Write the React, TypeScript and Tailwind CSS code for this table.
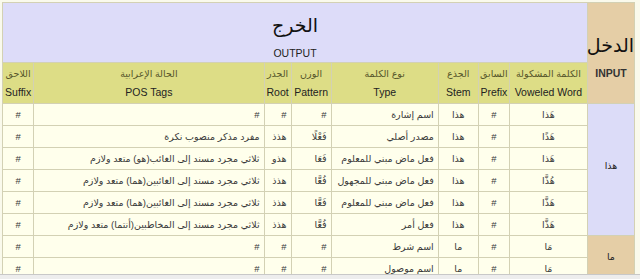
type Row = {
  word: string
  prefix: string
  stem: string
  type: string
  pattern: string
  root: string
  pos: string
  suffix: string
}

const haza: Row[] = [
  { word: 'هَذا', prefix: '#', stem: 'هذا', type: 'اسم إشارة', pattern: '#', root: '#', pos: '#', suffix: '#' },
  { word: 'هَذًا', prefix: '#', stem: 'هذا', type: 'مصدر أصلي', pattern: 'فَعْلًا', root: 'هذذ', pos: 'مفرد مذكر منصوب نكرة', suffix: '#' },
  { word: 'هَذا', prefix: '#', stem: 'هذا', type: 'فعل ماض مبني للمعلوم', pattern: 'فَعَا', root: 'هذو', pos: 'ثلاثي مجرد مسند إلى الغائب(هو) متعد ولازم', suffix: '#' },
  { word: 'هُذَّا', prefix: '#', stem: 'هذا', type: 'فعل ماض مبني للمجهول', pattern: 'فُعَّا', root: 'هذذ', pos: 'ثلاثي مجرد مسند إلى الغائبين(هما) متعد ولازم', suffix: '#' },
  { word: 'هَذَّا', prefix: '#', stem: 'هذا', type: 'فعل ماض مبني للمعلوم', pattern: 'فَعَّا', root: 'هذذ', pos: 'ثلاثي مجرد مسند إلى الغائبين(هما) متعد ولازم', suffix: '#' },
  { word: 'هَذَّا', prefix: '#', stem: 'هذا', type: 'فعل أمر', pattern: 'فُعَّا', root: 'هذذ', pos: 'ثلاثي مجرد مسند إلى المخاطبين(أنتما) متعد ولازم', suffix: '#' },
]

const ma: Row[] = [
  { word: 'مَا', prefix: '#', stem: 'ما', type: 'اسم شرط', pattern: '#', root: '#', pos: '#', suffix: '#' },
  { word: 'مَا', prefix: '#', stem: 'ما', type: 'اسم موصول', pattern: '#', root: '#', pos: '#', suffix: '#' },
]

const cell =
  'border border-[#d3d1b4] bg-[#ffffec] h-[22px] p-0 px-[4px] text-[9.5px] leading-[20px] text-[#3a3a3a] align-middle whitespace-nowrap overflow-hidden'
const head =
  'border border-[#d3d1b4] bg-[#dddd86] p-0 text-[10.5px] text-[#222] align-middle text-center leading-[19px] whitespace-nowrap overflow-hidden'

function DataRow({ row, input }: { row: Row; input?: React.ReactNode }) {
  return (
    <tr className="h-[22px]">
      {input}
      <td className={`${cell} text-center`}>{row.word}</td>
      <td className={`${cell} text-center`}>{row.prefix}</td>
      <td className={`${cell} text-center`}>{row.stem}</td>
      <td className={`${cell} text-right`}>{row.type}</td>
      <td className={`${cell} text-right`}>{row.pattern}</td>
      <td className={`${cell} text-right`}>{row.root}</td>
      <td className={`${cell} text-right`}>{row.pos}</td>
      <td className={`${cell} text-center`}>{row.suffix}</td>
    </tr>
  )
}

function Head({ ar, en }: { ar: string; en: string }) {
  return (
    <td className={head}>
      <div className="text-[9.5px] text-[#55552a]">{ar}</div>
      <div>{en}</div>
    </td>
  )
}

export default function App() {
  return (
    <div className="h-[279px] w-[640px] overflow-hidden bg-white flex flex-col font-['Liberation_Sans','DejaVu_Sans',sans-serif]">
      <div className="flex-1 overflow-hidden bg-[#fafaec] pt-[2px] pl-[2px]">
        <table dir="rtl" className="table-fixed border-collapse w-[633px] border border-[#cfcdb0]">
          <colgroup>
            <col className="w-[47px]" />
            <col className="w-[78px]" />
            <col className="w-[31px]" />
            <col className="w-[40px]" />
            <col className="w-[107px]" />
            <col className="w-[40px]" />
            <col className="w-[27px]" />
            <col className="w-[230px]" />
            <col className="w-[31px]" />
          </colgroup>
          <tbody>
            <tr className="h-[60px]">
              <td rowSpan={2} className="border border-[#d3d1b4] bg-[#e5cea6] p-0 text-center align-top">
                <div className="text-[19px] leading-[24px] text-[#111] mt-[31px]">الدخل</div>
                <div className="text-[10.5px] font-bold text-[#333] leading-[16px] mt-[7px]">INPUT</div>
              </td>
              <td colSpan={8} className="border border-[#d3d1b4] bg-[#dddcf9] p-0 text-center align-top overflow-hidden">
                <div className="text-[19px] leading-[26px] text-[#111] mt-[10px]">الخرج</div>
                <div className="text-[10.5px] text-[#222] leading-[16px] mt-[6px]">OUTPUT</div>
              </td>
            </tr>
            <tr className="h-[41px]">
              <Head ar="الكلمة المشكولة" en="Voweled Word" />
              <Head ar="السابق" en="Prefix" />
              <Head ar="الجذع" en="Stem" />
              <Head ar="نوع الكلمة" en="Type" />
              <Head ar="الوزن" en="Pattern" />
              <Head ar="الجذر" en="Root" />
              <Head ar="الحالة الإعرابية" en="POS Tags" />
              <Head ar="اللاحق" en="Suffix" />
            </tr>
            {haza.map((r, i) => (
              <DataRow
                key={'h' + i}
                row={r}
                input={
                  i === 0 ? (
                    <td rowSpan={6} className="border border-[#d3d1b4] bg-[#dcdcf8] p-0 pb-[6px] text-center align-middle text-[9.5px] text-[#222]">
                      هذا
                    </td>
                  ) : undefined
                }
              />
            ))}
            {ma.map((r, i) => (
              <DataRow
                key={'m' + i}
                row={r}
                input={
                  i === 0 ? (
                    <td rowSpan={2} className="border border-[#d3d1b4] bg-[#e5cea6] p-0 text-center align-middle text-[9.5px] text-[#222]">
                      ما
                    </td>
                  ) : undefined
                }
              />
            ))}
          </tbody>
        </table>
      </div>
      <div className="h-[5px] border-t border-[#c8c8c8] bg-[#ededed]" />
    </div>
  )
}
